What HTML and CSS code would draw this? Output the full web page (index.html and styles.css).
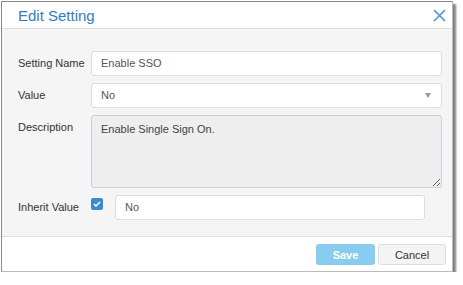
FILE: index.html
```html
<!DOCTYPE html>
<html lang="en">
<head>
  <meta charset="UTF-8">
  <title>Edit Setting</title>
  <link rel="stylesheet" href="styles.css">
</head>
<body>
  <div class="dialog">
    <header class="dialog-header">
      <h1>Edit Setting</h1>
      <button class="close-button" aria-label="Close">
        <svg width="13" height="13" viewBox="0 0 13 13">
          <path d="M1 1 L12 12 M12 1 L1 12" stroke="#4a8fd8" stroke-width="1.5" fill="none"/>
        </svg>
      </button>
    </header>

    <div class="dialog-body">
      <div class="form-row">
        <label>Setting Name</label>
        <div class="field">Enable SSO</div>
      </div>
      <div class="form-row">
        <label>Value</label>
        <div class="field select-field">
          <span>No</span>
          <span class="caret"></span>
        </div>
      </div>
      <div class="form-row">
        <label>Description</label>
        <textarea class="description" readonly>Enable Single Sign On.</textarea>
      </div>
      <div class="form-row">
        <label>Inherit Value</label>
        <span class="checkbox">
          <svg width="12" height="12" viewBox="0 0 12 12">
            <path d="M3 6.2 L5 8 L9 4" stroke="#fff" stroke-width="1.6" fill="none"/>
          </svg>
        </span>
        <div class="field inherit-field">No</div>
      </div>
    </div>

    <footer class="dialog-footer">
      <button class="save-button">Save</button>
      <button class="cancel-button">Cancel</button>
    </footer>
  </div>
</body>
</html>
```

FILE: styles.css
```css
* {
  margin: 0;
  padding: 0;
  box-sizing: border-box;
}

body {
  font-family: 'Liberation Sans', Arial, sans-serif;
  background-color: #fff;
  color: #333;
}

.dialog {
  width: 452px;
  margin: 1px 0 0 1px;
  border: 1px solid #8a8a8a;
  border-right-color: #bbb;
  border-bottom-color: #bbb;
  background-color: #fff;
  box-shadow: 3px 3px 2px rgba(0, 0, 0, 0.5);
}

/* Header */
.dialog-header {
  height: 27px;
  display: flex;
  justify-content: space-between;
  align-items: center;
  padding: 0 5px 0 16px;
  border-bottom: 1px solid #ddd;
}

.dialog-header h1 {
  font-size: 15px;
  font-weight: 400;
  color: #2f7bd0;
}

.close-button {
  border: none;
  background: none;
  width: 16px;
  height: 16px;
  display: flex;
  align-items: center;
  justify-content: center;
  cursor: pointer;
}

/* Body */
.dialog-body {
  background-color: #f5f5f5;
  padding: 22px 10px 16px 16px;
  display: flex;
  flex-direction: column;
  gap: 7px;
}

.form-row {
  display: flex;
  align-items: flex-start;
}

.form-row label {
  width: 73px;
  flex-shrink: 0;
  font-size: 11px;
  line-height: 25px;
  color: #333;
}

.field {
  flex: 1;
  height: 25px;
  line-height: 23px;
  padding: 0 9px;
  background-color: #fff;
  border: 1px solid #ddd;
  border-radius: 3px;
  font-size: 11px;
  color: #555;
}

.select-field {
  display: flex;
  justify-content: space-between;
  align-items: center;
}

.caret {
  width: 0;
  height: 0;
  margin-right: 1px;
  border-left: 3.5px solid transparent;
  border-right: 3.5px solid transparent;
  border-top: 5px solid #999;
}

.description {
  flex: 1;
  height: 73px;
  padding: 7px 9px;
  background-color: #eee;
  border: 1px solid #c9d0d8;
  border-radius: 3px;
  font-family: inherit;
  font-size: 11px;
  line-height: 13px;
  color: #444;
  outline: none;
}

.checkbox {
  width: 12px;
  height: 12px;
  margin-top: 3px;
  border-radius: 2px;
  background-color: #3a89d4;
  display: flex;
}

.inherit-field {
  flex: none;
  width: 310px;
  margin-left: 12px;
}

/* Footer */
.dialog-footer {
  height: 35px;
  border-top: 1px solid #ddd;
  display: flex;
  justify-content: flex-end;
  align-items: flex-start;
  gap: 3px;
  padding: 7px 6px 0 0;
}

.dialog-footer button {
  height: 21px;
  border-radius: 3px;
  font-family: inherit;
  font-size: 11px;
  cursor: pointer;
}

.save-button {
  width: 59px;
  border: none;
  background-color: #88cdef;
  color: #fff;
  font-weight: 700;
}

.cancel-button {
  width: 68px;
  border: 1px solid #ddd;
  background-color: #f4f4f4;
  color: #333;
}
```
